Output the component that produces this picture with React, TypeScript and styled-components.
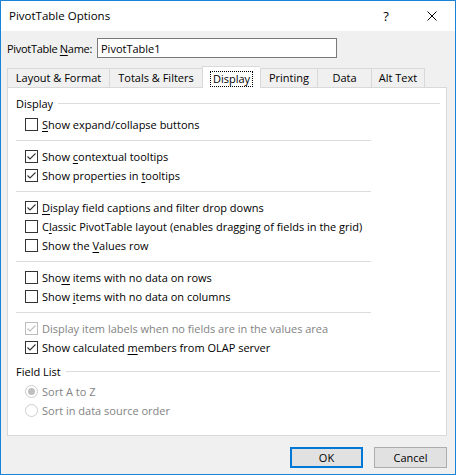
import React from "react";
import styled, { createGlobalStyle } from "styled-components";

const FONT = `"Open Sans", "Noto Sans", "DejaVu Sans", sans-serif`;

const Global = createGlobalStyle`
  html, body { margin: 0; padding: 0; background: #f0f0f0; }
  body { font-family: ${FONT}; font-size: 11px; color: #000; }
  * { box-sizing: border-box; }
`;

const Window = styled.div`
  width: 456px;
  height: 475px;
  border: 1px solid #1883d7;
  background: #f0f0f0;
  display: flex;
  flex-direction: column;
  overflow: hidden;
`;

const TitleBar = styled.div`
  height: 30px;
  background: #fff;
  display: flex;
  align-items: center;
  flex-shrink: 0;
`;

const Title = styled.div`
  flex: 1;
  padding-left: 8px;
  font-size: 11.5px;
  line-height: 30px;
`;

const CaptionButton = styled.div`
  width: 46px;
  height: 30px;
  display: flex;
  align-items: center;
  justify-content: center;
  font-size: 13px;
`;

const Body = styled.div`
  flex: 1;
  display: flex;
  flex-direction: column;
  padding: 7px 8px 0 6px;
`;

const NameRow = styled.div`
  display: flex;
  align-items: center;
  height: 20px;
`;

const NameLabel = styled.span`
  width: 90px;
  letter-spacing: -0.3px;
  white-space: nowrap;
`;

const NameInput = styled.div`
  width: 240px;
  height: 20px;
  border: 1px solid #7a7a7a;
  background: #fff;
  padding-left: 3px;
  display: flex;
  align-items: center;
`;

const U = styled.span`
  text-decoration: underline;
  text-underline-offset: 2px;
  text-decoration-thickness: 1px;
`;

const TabStrip = styled.div`
  display: flex;
  align-items: flex-end;
  height: 22px;
  margin-top: 8px;
  margin-bottom: -1px;
  position: relative;
  z-index: 1;
`;

const Tab = styled.div<{ $w: number; $active?: boolean; $last?: boolean }>`
  width: ${(p) => p.$w}px;
  height: ${(p) => (p.$active ? 22 : 20)}px;
  border: 1px solid #d9d9d9;
  border-right: ${(p) => (p.$last ? "1px solid #d9d9d9" : "none")};
  border-bottom: ${(p) => (p.$active ? "none" : "1px solid #d9d9d9")};
  background: ${(p) => (p.$active ? "#fff" : "#f0f0f0")};
  display: flex;
  align-items: center;
  justify-content: center;
  padding-bottom: ${(p) => (p.$active ? 0 : 1)}px;
  padding-top: ${(p) => (p.$active ? 2 : 0)}px;
  flex-shrink: 0;
`;

const Focus = styled.span`
  outline: 1px dotted #000;
  outline-offset: 0;
  padding: 0 2px;
  line-height: 14px;
`;

const Panel = styled.div`
  width: 440px;
  height: 349px;
  background: #fff;
  border: 1px solid #d9d9d9;
  padding: 7px 6px 0 8px;
  display: flex;
  flex-direction: column;
`;

const GroupHeader = styled.div`
  display: flex;
  align-items: center;
  gap: 5px;
  height: 16px;
  margin-bottom: 4px;
`;

const HeaderLine = styled.div`
  flex: 1;
  height: 1px;
  background: #dcdcdc;
`;

const Row = styled.div<{ $disabled?: boolean }>`
  display: flex;
  align-items: center;
  gap: 4px;
  height: 19px;
  padding-left: 9px;
  color: ${(p) => (p.$disabled ? "#838383" : "#000")};
  white-space: nowrap;
`;

const Separator = styled.div`
  width: 355px;
  height: 1px;
  background: #dcdcdc;
  margin: 6px 0;
`;

const FieldHeader = styled(GroupHeader)`
  margin-top: 6px;
  margin-bottom: 3px;
`;

const Footer = styled.div`
  display: flex;
  justify-content: flex-end;
  gap: 11px;
  margin-top: 11px;
`;

const Button = styled.div<{ $default?: boolean }>`
  width: 73px;
  height: 21px;
  background: #e1e1e1;
  border: ${(p) => (p.$default ? "2px solid #0078d7" : "1px solid #adadad")};
  display: flex;
  align-items: center;
  justify-content: center;
`;

const Check = ({ checked, disabled }: { checked?: boolean; disabled?: boolean }) => {
  const c = disabled ? "#bcbcbc" : "#333333";
  return (
    <svg width="13" height="13" viewBox="0 0 13 13" style={{ flexShrink: 0 }}>
      <rect x="0.5" y="0.5" width="12" height="12" fill="#fff" stroke={c} />
      {checked && (
        <polyline points="2.5,6.5 5,9 10.5,3.5" fill="none" stroke={c} strokeWidth="1.1" />
      )}
    </svg>
  );
};

const Radio = ({ checked }: { checked?: boolean }) => (
  <svg width="13" height="13" viewBox="0 0 13 13" style={{ flexShrink: 0 }}>
    <circle cx="6.5" cy="6.5" r="6" fill="#fff" stroke="#cccccc" />
    {checked && <circle cx="6.5" cy="6.5" r="3.5" fill="#bfbfbf" />}
  </svg>
);

type Item = { label: React.ReactNode; checked?: boolean; disabled?: boolean };

const groups: Item[][] = [
  [{ label: <><U>S</U>how expand/collapse buttons</> }],
  [
    { label: <>Show <U>c</U>ontextual tooltips</>, checked: true },
    { label: <>Show properties in <U>t</U>ooltips</>, checked: true },
  ],
  [
    { label: <><U>D</U>isplay field captions and filter drop downs</>, checked: true },
    { label: <>C<U>l</U>assic PivotTable layout (enables dragging of fields in the grid)</> },
    { label: <>Show the <U>V</U>alues row</> },
  ],
  [
    { label: <>Sho<U>w</U> items with no data on rows</> },
    { label: <>Show <U>i</U>tems with no data on columns</> },
  ],
  [
    { label: <>Display item labels when no fields are in the values area</>, checked: true, disabled: true },
    { label: <>Show calculated <U>m</U>embers from OLAP server</>, checked: true },
  ],
];

const tabs = [
  { label: "Layout & Format", w: 102 },
  { label: "Totals & Filters", w: 93 },
  { label: "Display", w: 58, active: true },
  { label: "Printing", w: 57 },
  { label: "Data", w: 54 },
  { label: "Alt Text", w: 54, last: true },
];

export default function App() {
  return (
    <>
      <Global />
      <Window>
        <TitleBar>
          <Title>PivotTable Options</Title>
          <CaptionButton>?</CaptionButton>
          <CaptionButton>
            <svg width="10" height="10" viewBox="0 0 10 10">
              <path d="M0.5 0.5 L9.5 9.5 M9.5 0.5 L0.5 9.5" stroke="#000" strokeWidth="1" fill="none" />
            </svg>
          </CaptionButton>
        </TitleBar>
        <Body>
          <NameRow>
            <NameLabel>PivotTable <U>N</U>ame:</NameLabel>
            <NameInput>PivotTable1</NameInput>
          </NameRow>
          <TabStrip>
            {tabs.map((t) => (
              <Tab key={t.label} $w={t.w} $active={t.active} $last={t.last}>
                {t.active ? <Focus>{t.label}</Focus> : t.label}
              </Tab>
            ))}
          </TabStrip>
          <Panel>
            <GroupHeader>
              <span>Display</span>
              <HeaderLine />
            </GroupHeader>
            {groups.map((g, gi) => (
              <React.Fragment key={gi}>
                {gi > 0 && <Separator />}
                {g.map((it, ii) => (
                  <Row key={ii} $disabled={it.disabled}>
                    <Check checked={it.checked} disabled={it.disabled} />
                    <span>{it.label}</span>
                  </Row>
                ))}
              </React.Fragment>
            ))}
            <FieldHeader>
              <span>Field List</span>
              <HeaderLine />
            </FieldHeader>
            <Row $disabled>
              <Radio checked />
              <span>Sort A to Z</span>
            </Row>
            <Row $disabled>
              <Radio />
              <span>Sort in data source order</span>
            </Row>
          </Panel>
          <Footer>
            <Button $default>OK</Button>
            <Button>Cancel</Button>
          </Footer>
        </Body>
      </Window>
    </>
  );
}
